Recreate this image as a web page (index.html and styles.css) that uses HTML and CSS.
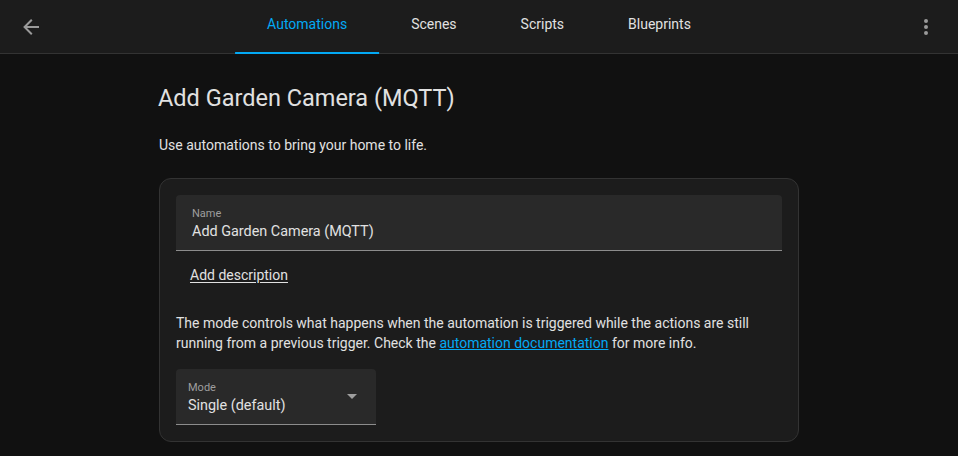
FILE: index.html
```html
<!DOCTYPE html>
<html>
<head>
<meta charset="utf-8">
<link rel="stylesheet" href="styles.css">
</head>
<body>
<header class="toolbar">
  <div class="icon-btn back">
    <svg viewBox="0 0 24 24" width="24" height="24"><path d="M20 11v2H8l5.5 5.5-1.42 1.42L4.16 12l7.92-7.92L13.5 5.5 8 11h12z" fill="currentColor"/></svg>
  </div>
  <nav class="tabs">
    <div class="tab active">Automations</div>
    <div class="tab">Scenes</div>
    <div class="tab">Scripts</div>
    <div class="tab">Blueprints</div>
  </nav>
  <div class="icon-btn menu">
    <svg viewBox="0 0 24 24" width="24" height="24"><path d="M12 16a2 2 0 0 1 2 2 2 2 0 0 1-2 2 2 2 0 0 1-2-2 2 2 0 0 1 2-2m0-6a2 2 0 0 1 2 2 2 2 0 0 1-2 2 2 2 0 0 1-2-2 2 2 0 0 1 2-2m0-6a2 2 0 0 1 2 2 2 2 0 0 1-2 2 2 2 0 0 1-2-2 2 2 0 0 1 2-2z" fill="currentColor"/></svg>
  </div>
</header>
<main class="content">
  <h1 class="title">Add Garden Camera (MQTT)</h1>
  <p class="intro">Use automations to bring your home to life.</p>
  <section class="card">
    <div class="field wide">
      <span class="label">Name</span>
      <span class="value">Add Garden Camera (MQTT)</span>
    </div>
    <div class="add-desc"><span>Add description</span></div>
    <p class="help">The mode controls what happens when the automation is triggered while the actions are still running from a previous trigger. Check the <a class="link">automation documentation</a> for more info.</p>
    <div class="field select">
      <span class="label">Mode</span>
      <span class="value">Single (default)</span>
      <span class="caret"></span>
    </div>
  </section>
</main>
</body>
</html>
```

FILE: styles.css
```css
* { box-sizing: border-box; }
html, body { margin: 0; padding: 0; }
body {
  background: #111111;
  color: #e1e1e1;
  font-family: Roboto, "Noto Sans", sans-serif;
  width: 958px;
  height: 456px;
  overflow: hidden;
}
.toolbar {
  height: 54px;
  background: #1c1c1c;
  border-bottom: 1px solid #333333;
  display: flex;
  align-items: stretch;
  position: relative;
}
.icon-btn {
  width: 62px;
  display: flex;
  align-items: center;
  justify-content: center;
  color: #9a9a9a;
}
.menu { margin-left: auto; width: 36px; margin-right: 14px; }
.tabs {
  position: absolute;
  left: 50%;
  transform: translateX(-50%);
  top: 0;
  height: 53px;
  display: flex;
}
.tab {
  padding: 0 32px 5px;
  font-size: 14px;
  font-weight: 400;
  display: flex;
  align-items: center;
  color: #e1e1e1;
  border-bottom: 2px solid transparent;
  height: 54px;
}
.tab.active {
  color: #03a9f4;
  border-bottom-color: #03a9f4;
}
.content {
  width: 640px;
  margin: 0 auto;
  padding-top: 28px;
}
.title {
  font-size: 23.5px;
  font-weight: 400;
  margin: 0 0 0 -1px;
  line-height: 32px;
  color: #e1e1e1;
}
.intro {
  font-size: 14px;
  line-height: 20px;
  margin: 21px 0 23px;
  color: #e1e1e1;
}
.card {
  background: #1c1c1c;
  border: 1px solid #333333;
  border-radius: 12px;
  padding: 16px;
}
.field {
  background: #292929;
  border-radius: 4px 4px 0 0;
  border-bottom: 1px solid #8c8c8c;
  height: 56px;
  padding: 12px 16px 0;
  display: flex;
  flex-direction: column;
  position: relative;
}
.label {
  font-size: 11px;
  line-height: 14px;
  color: #9e9e9e;
}
.value {
  font-size: 14.4px;
  line-height: 22px;
  color: #e1e1e1;
}
.add-desc {
  padding: 16px 14px 0;
  height: 44px;
  font-size: 14px;
  font-weight: 400;
}
.add-desc span {
  text-decoration: underline;
  text-underline-offset: 2px;
}
.help {
  font-size: 14px;
  line-height: 20px;
  margin: 18px 0 16px;
  color: #e1e1e1;
}
.link {
  color: #03a9f4;
  text-decoration: underline;
}
.select {
  width: 200px;
  padding-left: 12px;
}
.caret {
  position: absolute;
  right: 19px;
  top: 25px;
  width: 0;
  height: 0;
  border-left: 5px solid transparent;
  border-right: 5px solid transparent;
  border-top: 5px solid #9e9e9e;
}
```
